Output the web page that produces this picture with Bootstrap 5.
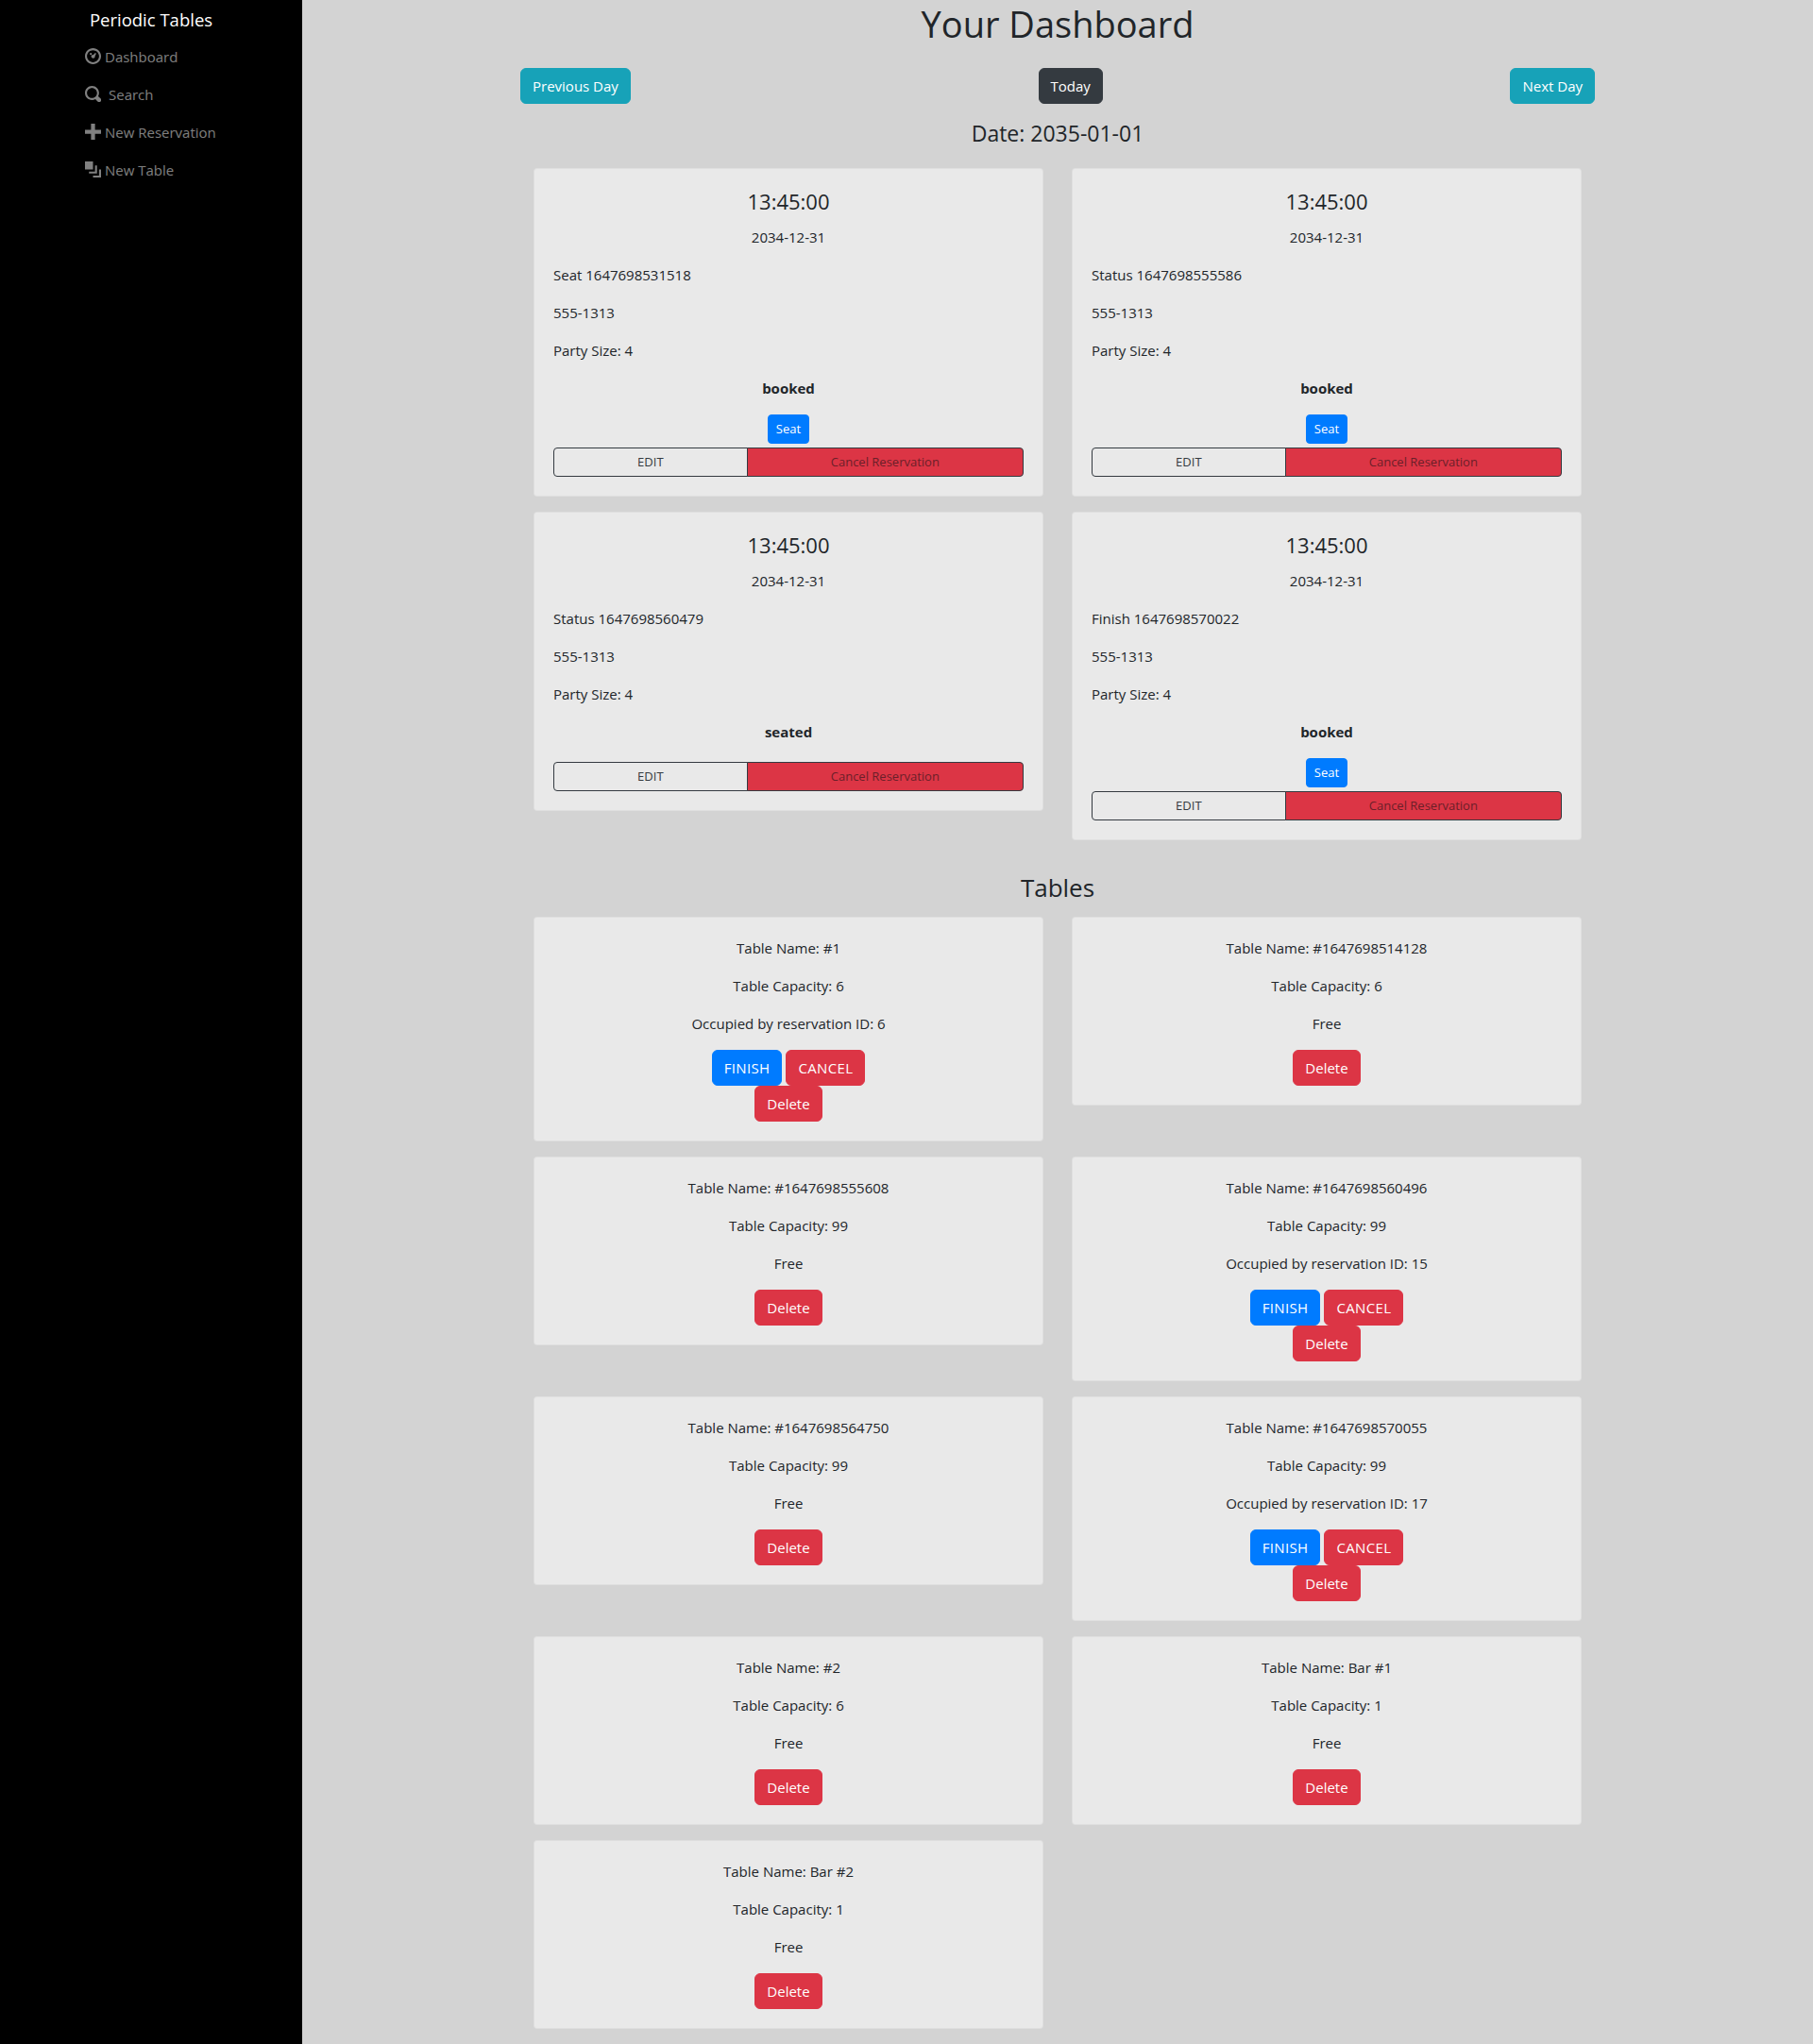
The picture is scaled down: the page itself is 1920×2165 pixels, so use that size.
<!DOCTYPE html>
<html lang="en">
<head>
  <meta charset="UTF-8" />
  <meta name="viewport" content="width=device-width, initial-scale=1.0" />
  <title>Periodic Tables</title>
  <link href="https://cdn.jsdelivr.net/npm/bootstrap@5.3.2/dist/css/bootstrap.min.css" rel="stylesheet">
  <style>
    :root {
      --bs-border-radius: .25rem;
      --bs-border-radius-sm: .2rem;
    }
    body {
      background-color: #d3d3d3;
      color: #212529;
      font-family: "Open Sans", "Noto Sans", sans-serif;
      font-size: 15px;
      line-height: 24px;
    }
    h1 { font-size: 38px; line-height: 48px; font-weight: 500; padding-top: 1px; margin-bottom: 23px; }
    h3 { font-size: 26px; line-height: 34px; font-weight: 500; margin: 25px 0 6px; }
    h4 { font-size: 22px; line-height: 29px; font-weight: 500; }
    .side-bar { width: 320px; flex-shrink: 0; background: #000; }
    .side-title { color: #fff; font-size: 18.5px; line-height: 30px; padding: 6px 0 4px; }
    .side-link { color: rgba(255,255,255,.5); height: 40px; padding-left: 90px; display: flex; align-items: center; gap: 4px; font-size: 15px; text-decoration: none; }
    .side-link svg { width: 17px; height: 17px; fill: currentColor; margin-top: -2px; }
    .dash-wrap { width: 1140px; margin: 0 auto; }
    .day-nav { padding: 0 1px; }
    .btn { font-size: 15px; line-height: 24px; }
    .btn-sm { font-size: 13px; line-height: 21px; }
    .btn-caps { letter-spacing: .35px; }
    .btn-info { --bs-btn-color: #fff; --bs-btn-bg: #17a2b8; --bs-btn-border-color: #17a2b8; }
    .btn-dark { --bs-btn-bg: #343a40; --bs-btn-border-color: #343a40; }
    .btn-primary { --bs-btn-bg: #007bff; --bs-btn-border-color: #007bff; }
    .btn-danger { --bs-btn-bg: #dc3545; --bs-btn-border-color: #dc3545; }
    .btn-group .btn-danger { --bs-btn-color: #6b1f29; --bs-btn-border-color: #343a40; }
    .btn-group .btn-outline-dark { --bs-btn-color: #343a40; --bs-btn-border-color: #343a40; }
    .dash-card {
      --bs-card-bg: #e9e9e9;
      --bs-card-border-color: rgba(0,0,0,.04);
      --bs-card-spacer-x: 20px;
      --bs-card-spacer-y: 20px;
      --bs-card-title-spacer-y: 11px;
      margin: 8px 15px;
    }
    .dash-card p { margin-bottom: 16px; }
    .date-title { font-size: 23px; margin: 17px 0 14px; }
    .dash-card .btn-group { margin-top: 4px; }
    .seat-line { height: 31px; }
    .table-actions { line-height: 0; }
  </style>
</head>
<body>
  <div class="d-flex min-vh-100">
    <nav class="side-bar">
      <div class="side-title text-center">Periodic Tables</div>
      <a class="side-link" href="#">
        <svg viewBox="0 0 8 8"><path d="M4 0C1.800 0 0 1.800 0 4s1.800 4 4 4 4-1.800 4-4-1.800-4-4-4zm0 1c1.660 0 3 1.340 3 3S5.660 7 4 7 1 5.660 1 4s1.340-3 3-3z"/><circle cx="2.900" cy="2.900" r=".5"/><path d="M4.200 3.300l.9-1 .5.400-.6 1.200c.1.600-.3 1.100-.9 1.100s-1-.4-1-.9.500-.9 1.100-.8z"/></svg>
        Dashboard
      </a>
      <a class="side-link" href="#">
        <svg viewBox="0 0 8 8"><path d="M3.500 0C1.570 0 0 1.570 0 3.500S1.570 7 3.500 7c.59 0 1.170-.14 1.660-.41a1 1 0 0 0 .13.13l1 1a1.020 1.020 0 1 0 1.440-1.440l-1-1a1 1 0 0 0-.16-.13c.27-.49.44-1.060.44-1.660C7 1.570 5.430 0 3.500 0zm0 1C4.890 1 6 2.110 6 3.500c0 .66-.24 1.270-.66 1.720l-.03.03a1 1 0 0 0-.13.13c-.44.4-1.040.62-1.680.62C2.110 6 1 4.890 1 3.500S2.110 1 3.500 1z"/></svg>
        <span class="ms-1">Search</span>
      </a>
      <a class="side-link" href="#">
        <svg viewBox="0 0 8 8"><path d="M3 0v3H0v2h3v3h2V5h3V3H5V0H3z"/></svg>
        New Reservation
      </a>
      <a class="side-link" href="#">
        <svg viewBox="0 0 8 8"><path d="M0 0v4h4V0H0zm5 2v3H2v1h4V2H5zm2 2v3H4v1h4V4H7z"/></svg>
        New Table
      </a>
    </nav>

    <main class="flex-grow-1">
      <div class="dash-wrap">
        <h1 class="text-center">Your Dashboard</h1>
        <div class="d-flex justify-content-between day-nav">
          <button type="button" class="btn btn-info">Previous Day</button>
          <button type="button" class="btn btn-dark">Today</button>
          <button type="button" class="btn btn-info">Next Day</button>
        </div>
        <h4 class="text-center date-title">Date: 2035-01-01</h4>

        <div class="row g-0 align-items-start">
          <div class="col-6">
            <div class="card dash-card">
              <div class="card-body">
                <h4 class="card-title text-center">13:45:00</h4>
                <p class="text-center">2034-12-31</p>
                <p>Seat 1647698531518</p>
                <p>555-1313</p>
                <p>Party Size: 4</p>
                <p class="text-center fw-bold">booked</p>
                <div class="text-center seat-line"><a href="#" class="btn btn-sm btn-primary">Seat</a></div>
                <div class="btn-group w-100">
                  <a href="#" class="btn btn-sm btn-outline-dark">EDIT</a>
                  <button type="button" class="btn btn-sm btn-danger">Cancel Reservation</button>
                </div>
              </div>
            </div>
          </div>
          <div class="col-6">
            <div class="card dash-card">
              <div class="card-body">
                <h4 class="card-title text-center">13:45:00</h4>
                <p class="text-center">2034-12-31</p>
                <p>Status 1647698555586</p>
                <p>555-1313</p>
                <p>Party Size: 4</p>
                <p class="text-center fw-bold">booked</p>
                <div class="text-center seat-line"><a href="#" class="btn btn-sm btn-primary">Seat</a></div>
                <div class="btn-group w-100">
                  <a href="#" class="btn btn-sm btn-outline-dark">EDIT</a>
                  <button type="button" class="btn btn-sm btn-danger">Cancel Reservation</button>
                </div>
              </div>
            </div>
          </div>
          <div class="col-6">
            <div class="card dash-card">
              <div class="card-body">
                <h4 class="card-title text-center">13:45:00</h4>
                <p class="text-center">2034-12-31</p>
                <p>Status 1647698560479</p>
                <p>555-1313</p>
                <p>Party Size: 4</p>
                <p class="text-center fw-bold">seated</p>
                <div class="btn-group w-100">
                  <a href="#" class="btn btn-sm btn-outline-dark">EDIT</a>
                  <button type="button" class="btn btn-sm btn-danger">Cancel Reservation</button>
                </div>
              </div>
            </div>
          </div>
          <div class="col-6">
            <div class="card dash-card">
              <div class="card-body">
                <h4 class="card-title text-center">13:45:00</h4>
                <p class="text-center">2034-12-31</p>
                <p>Finish 1647698570022</p>
                <p>555-1313</p>
                <p>Party Size: 4</p>
                <p class="text-center fw-bold">booked</p>
                <div class="text-center seat-line"><a href="#" class="btn btn-sm btn-primary">Seat</a></div>
                <div class="btn-group w-100">
                  <a href="#" class="btn btn-sm btn-outline-dark">EDIT</a>
                  <button type="button" class="btn btn-sm btn-danger">Cancel Reservation</button>
                </div>
              </div>
            </div>
          </div>
        </div>

        <h3 class="text-center">Tables</h3>

        <div class="row g-0 align-items-start text-center">
          <div class="col-6">
            <div class="card dash-card"><div class="card-body">
              <p>Table Name: #1</p>
              <p>Table Capacity: 6</p>
              <p>Occupied by reservation ID: 6</p>
              <div class="table-actions">
                <button type="button" class="btn btn-primary btn-caps">FINISH</button>
                <button type="button" class="btn btn-danger btn-caps">CANCEL</button>
              </div>
              <div class="table-actions"><button type="button" class="btn btn-danger">Delete</button></div>
            </div></div>
          </div>
          <div class="col-6">
            <div class="card dash-card"><div class="card-body">
              <p>Table Name: #1647698514128</p>
              <p>Table Capacity: 6</p>
              <p>Free</p>
              <div class="table-actions"><button type="button" class="btn btn-danger">Delete</button></div>
            </div></div>
          </div>
          <div class="col-6">
            <div class="card dash-card"><div class="card-body">
              <p>Table Name: #1647698555608</p>
              <p>Table Capacity: 99</p>
              <p>Free</p>
              <div class="table-actions"><button type="button" class="btn btn-danger">Delete</button></div>
            </div></div>
          </div>
          <div class="col-6">
            <div class="card dash-card"><div class="card-body">
              <p>Table Name: #1647698560496</p>
              <p>Table Capacity: 99</p>
              <p>Occupied by reservation ID: 15</p>
              <div class="table-actions">
                <button type="button" class="btn btn-primary btn-caps">FINISH</button>
                <button type="button" class="btn btn-danger btn-caps">CANCEL</button>
              </div>
              <div class="table-actions"><button type="button" class="btn btn-danger">Delete</button></div>
            </div></div>
          </div>
          <div class="col-6">
            <div class="card dash-card"><div class="card-body">
              <p>Table Name: #1647698564750</p>
              <p>Table Capacity: 99</p>
              <p>Free</p>
              <div class="table-actions"><button type="button" class="btn btn-danger">Delete</button></div>
            </div></div>
          </div>
          <div class="col-6">
            <div class="card dash-card"><div class="card-body">
              <p>Table Name: #1647698570055</p>
              <p>Table Capacity: 99</p>
              <p>Occupied by reservation ID: 17</p>
              <div class="table-actions">
                <button type="button" class="btn btn-primary btn-caps">FINISH</button>
                <button type="button" class="btn btn-danger btn-caps">CANCEL</button>
              </div>
              <div class="table-actions"><button type="button" class="btn btn-danger">Delete</button></div>
            </div></div>
          </div>
          <div class="col-6">
            <div class="card dash-card"><div class="card-body">
              <p>Table Name: #2</p>
              <p>Table Capacity: 6</p>
              <p>Free</p>
              <div class="table-actions"><button type="button" class="btn btn-danger">Delete</button></div>
            </div></div>
          </div>
          <div class="col-6">
            <div class="card dash-card"><div class="card-body">
              <p>Table Name: Bar #1</p>
              <p>Table Capacity: 1</p>
              <p>Free</p>
              <div class="table-actions"><button type="button" class="btn btn-danger">Delete</button></div>
            </div></div>
          </div>
          <div class="col-6">
            <div class="card dash-card"><div class="card-body">
              <p>Table Name: Bar #2</p>
              <p>Table Capacity: 1</p>
              <p>Free</p>
              <div class="table-actions"><button type="button" class="btn btn-danger">Delete</button></div>
            </div></div>
          </div>
        </div>
      </div>
    </main>
  </div>
  <script src="https://cdn.jsdelivr.net/npm/bootstrap@5.3.2/dist/js/bootstrap.bundle.min.js"></script>
</body>
</html>
